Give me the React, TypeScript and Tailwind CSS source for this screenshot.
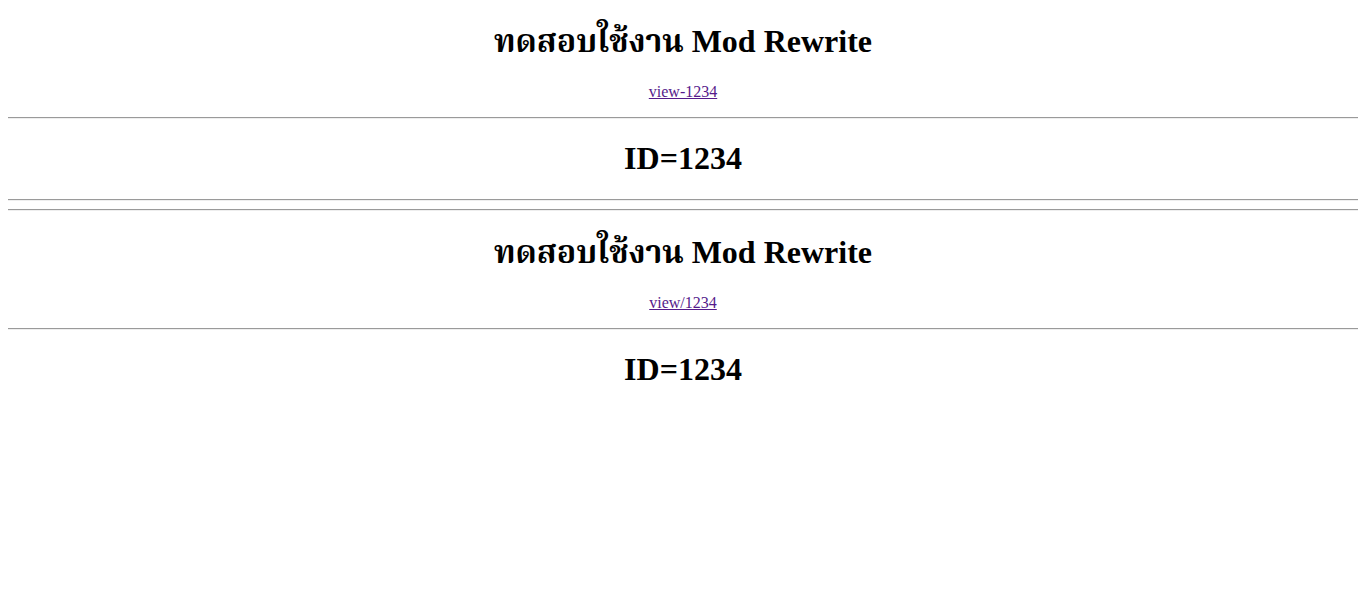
export default function App() {
  const hr = (
    <hr className="my-2 h-0 border-0 border-t border-b border-t-[#9a9a9a] border-b-[#eeeeee]" />
  );
  const font = { fontFamily: '"Liberation Serif", "Noto Serif Thai", "Noto Sans Thai", Tahoma, serif' };
  return (
    <div className="min-h-[605px] bg-white px-2 pt-[0.02px] text-black" style={font}>
      <h1 className="my-[21.44px] text-center text-[32px] font-bold leading-[40px]">
        ทดสอบใช้งาน Mod Rewrite
      </h1>
      <p className="my-4 text-center text-[16px] leading-[18px]">
        <a href="#" className="text-[#551a8b] underline">view-1234</a>
      </p>
      {hr}
      <h1 className="my-[21.44px] text-center text-[32px] font-bold leading-[37px]">ID=1234</h1>
      {hr}
      {hr}
      <h1 className="my-[21.44px] text-center text-[32px] font-bold leading-[40px]">
        ทดสอบใช้งาน Mod Rewrite
      </h1>
      <p className="my-4 text-center text-[16px] leading-[18px]">
        <a href="#" className="text-[#551a8b] underline">view/1234</a>
      </p>
      {hr}
      <h1 className="my-[21.44px] text-center text-[32px] font-bold leading-[37px]">ID=1234</h1>
    </div>
  );
}
